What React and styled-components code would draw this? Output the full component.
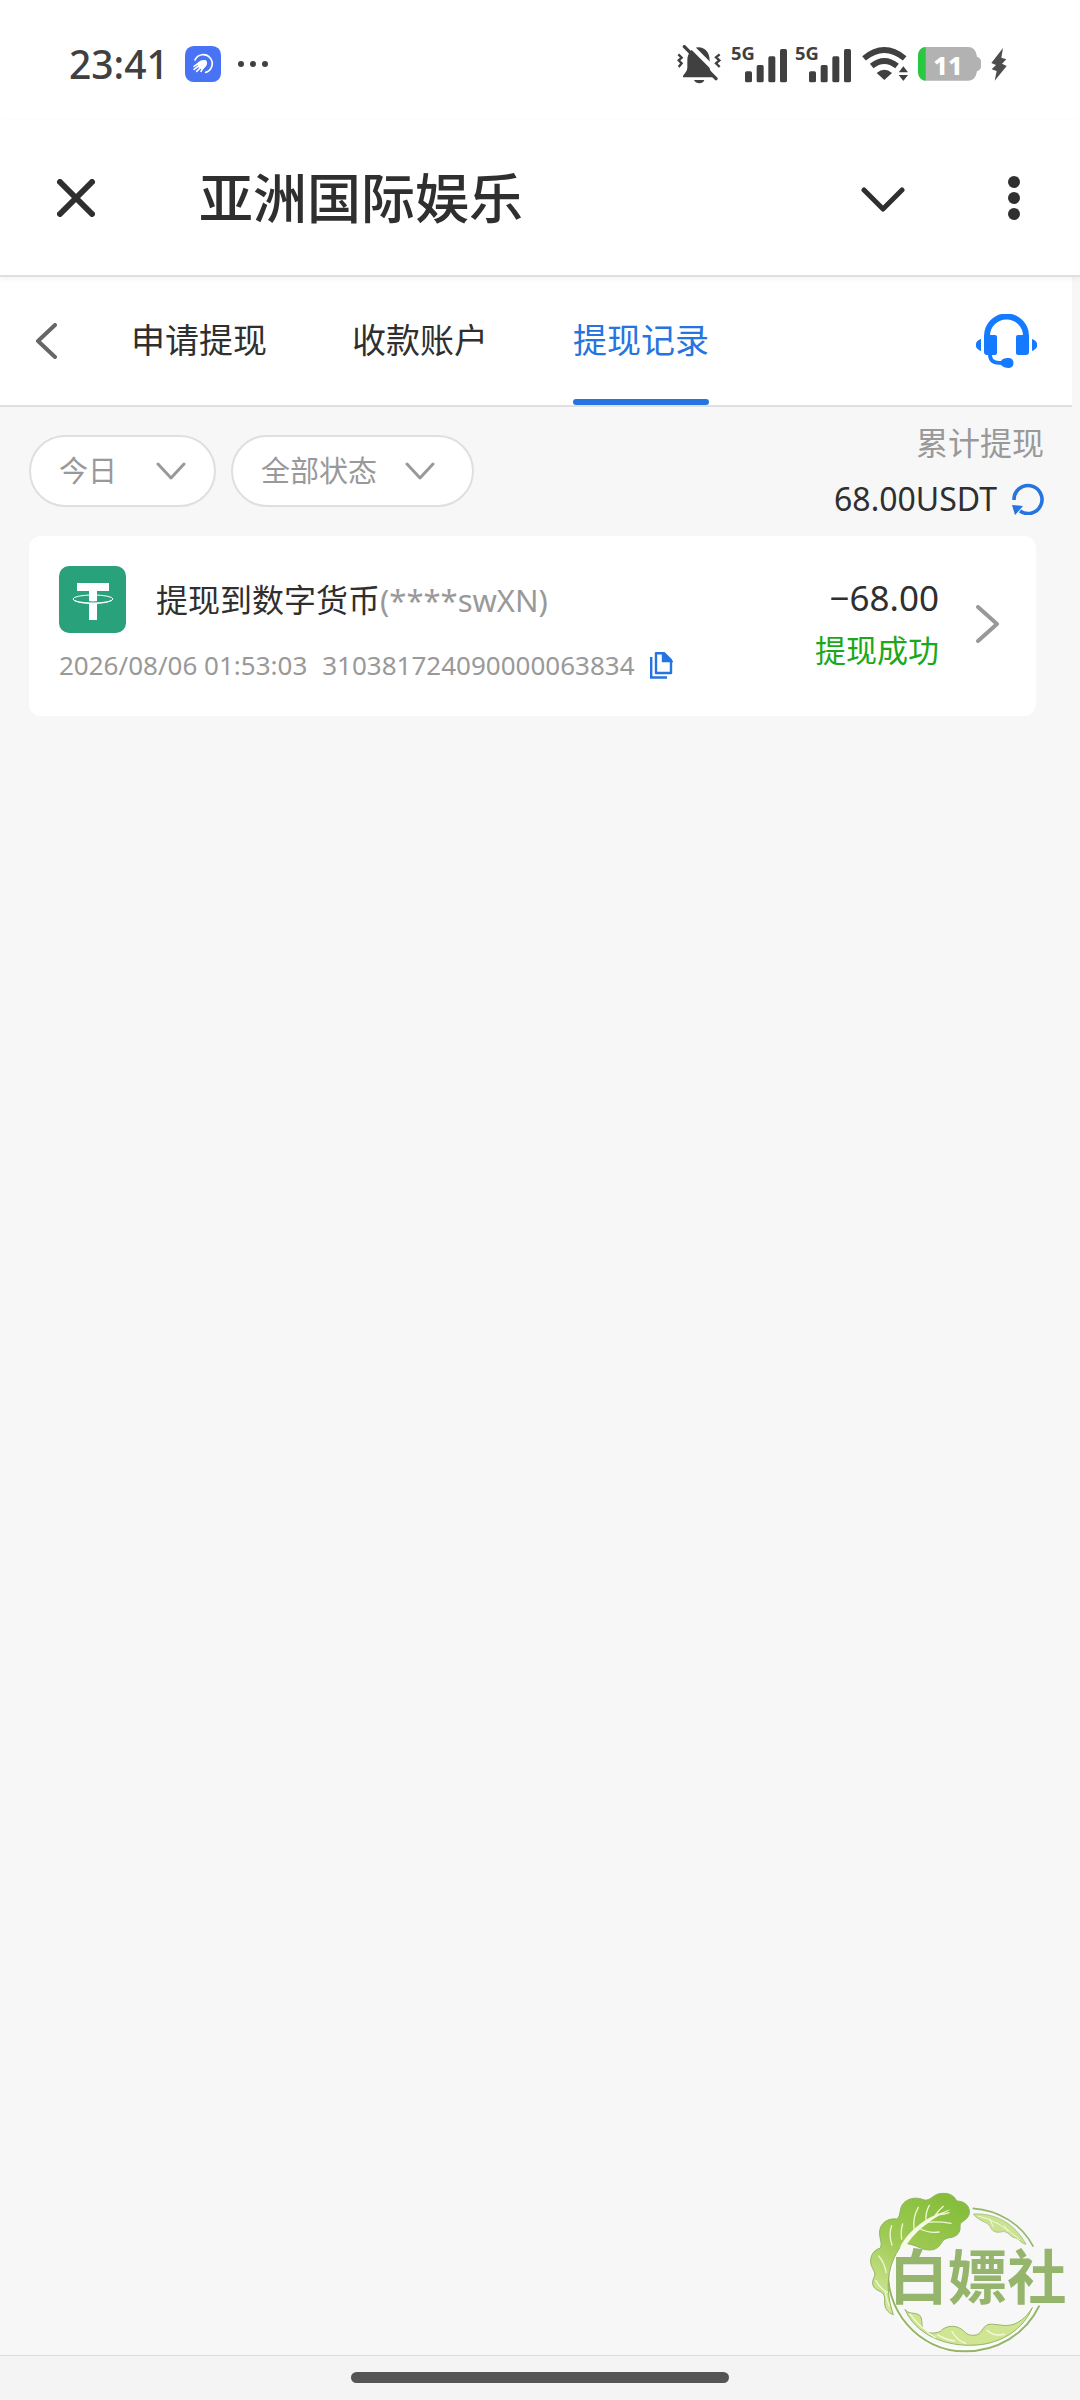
import React, { useState } from 'react';
import styled, { createGlobalStyle } from 'styled-components';

const theme = {
  text: '#2f2f2f',
  muted: '#999999',
  blue: '#2674e0',
  iconBlue: '#147aff',
  green: '#1ba81b',
  page: '#f7f7f7',
  border: '#dfdfdf',
  status: '#404040',
  logoGreen: '#94b56b',
};

const fontSize = {
  small: '26px',
  filter: '29px',
  note: '31px',
  medium: '32px',
  large: '35px',
};

const GlobalStyle = createGlobalStyle`
  * {
    box-sizing: border-box;
  }
  body {
    margin: 0;
    background: ${theme.page};
    color: ${theme.text};
    font-family: 'Noto Sans', 'Noto Sans CJK SC', sans-serif;
  }
  button, select {
    font: inherit;
    color: inherit;
    background: none;
    border: none;
    padding: 0;
    margin: 0;
  }
  svg {
    display: block;
    flex-shrink: 0;
  }
`;

const Page = styled.div`
  display: flex;
  flex-direction: column;
  min-height: 100vh;
`;

const StatusBar = styled.div`
  display: flex;
  align-items: center;
  justify-content: space-between;
  height: 120px;
  padding: 8px 73px 0 69px;
  background: #fff;
  color: ${theme.status};
`;

const StatusGroup = styled.div`
  display: flex;
  align-items: center;
  gap: ${props => props.$gap};
`;

const Clock = styled.span`
  font-size: 39px;
  font-weight: 500;
  line-height: 48px;
`;

const AppBar = styled.header`
  display: flex;
  align-items: center;
  height: 157px;
  padding: 0 59px 0 57px;
  background: #fff;
  border-bottom: 2px solid ${theme.border};
  box-shadow: 0 2px 5px rgba(0, 0, 0, 0.05);
  position: relative;
`;

const Title = styled.h1`
  flex: 1;
  margin: 0 0 4px 104px;
  font-family: 'Noto Sans CJK SC', sans-serif;
  font-size: 54px;
  font-weight: 500;
  line-height: 72px;
`;

const IconButton = styled.button`
  display: flex;
  align-items: center;
  justify-content: center;
  cursor: pointer;
`;

const MoreButton = styled(IconButton)`
  margin-left: 102px;
`;

const Content = styled.main`
  flex: 1;
  margin-right: 8px;
`;

const TabBar = styled.nav`
  display: flex;
  align-items: stretch;
  height: 130px;
  padding: 0 35px;
  background: #fff;
  border-bottom: 2px solid ${theme.border};
`;

const Tabs = styled.div`
  display: flex;
  flex: 1;
  gap: 85px;
  margin-left: 73px;
`;

const Tab = styled.a`
  display: flex;
  align-items: center;
  position: relative;
  padding-bottom: 2px;
  font-size: 34px;
  line-height: 48px;
  text-decoration: none;
  white-space: nowrap;
  color: ${props => (props.$active ? theme.blue : theme.text)};
  &::after {
    content: '';
    position: absolute;
    left: 0;
    right: 0;
    bottom: 0;
    height: 6px;
    border-radius: 3px;
    background: ${props => (props.$active ? theme.blue : 'transparent')};
  }
`;

const Toolbar = styled.div`
  display: flex;
  align-items: center;
  gap: 15px;
  padding: 8px 28px 9px 29px;
`;

const Pill = styled.label`
  display: flex;
  align-items: center;
  width: ${props => props.$width};
  height: 72px;
  padding: 0 ${props => props.$end} 0 28px;
  background: #fff;
  border: 2px solid ${theme.border};
  border-radius: 36px;
  color: ${theme.muted};
`;

const PillSelect = styled.select`
  appearance: none;
  flex: 1;
  min-width: 0;
  font-size: ${fontSize.filter};
  line-height: 40px;
  outline: none;
`;

const Summary = styled.div`
  margin-left: auto;
  text-align: right;
  line-height: 56px;
`;

const SummaryLabel = styled.div`
  font-size: ${fontSize.medium};
  color: ${theme.muted};
`;

const SummaryTotal = styled.div`
  display: flex;
  align-items: center;
  justify-content: flex-end;
  gap: 15px;
  font-size: ${fontSize.medium};
`;

const Card = styled.article`
  display: flex;
  align-items: center;
  margin: 0 36px 0 29px;
  padding: 30px 36px 31px 30px;
  background: #fff;
  border-radius: 12px;
`;

const CardMain = styled.div`
  display: flex;
  flex-direction: column;
  flex: 1;
  gap: 12px;
`;

const CardTitle = styled.div`
  display: flex;
  align-items: center;
  gap: 30px;
  font-size: ${fontSize.medium};
  line-height: 44px;
`;

const Account = styled.span`
  font-size: ${fontSize.note};
  color: ${theme.muted};
`;

const Meta = styled.div`
  display: flex;
  align-items: center;
  gap: 15px;
  font-size: ${fontSize.small};
  line-height: 40px;
  color: ${theme.muted};
`;

const Result = styled.div`
  margin-right: 37px;
  padding-bottom: 3px;
  text-align: right;
  line-height: 52px;
`;

const Amount = styled.div`
  font-size: ${fontSize.large};
`;

const State = styled.div`
  font-size: ${fontSize.note};
  color: ${theme.green};
`;

const DetailButton = styled(IconButton)`
  padding-bottom: 4px;
`;

const GestureArea = styled.footer`
  display: flex;
  justify-content: center;
  height: 45px;
  padding-top: 16px;
  background: #f4f4f4;
  border-top: 1px solid #dcdcdc;
`;

const GestureBar = styled.div`
  width: 35%;
  height: 11px;
  border-radius: 6px;
  background: #555;
`;

const Watermark = styled.svg`
  position: fixed;
  right: 0;
  bottom: 0;
  pointer-events: none;
`;

const Chevron = ({ width, height, d, color, stroke }) => (
  <svg width={width} height={height} viewBox={`0 0 ${width} ${height}`} fill="none"
    stroke={color} strokeWidth={stroke} strokeLinecap="round" strokeLinejoin="round">
    <path d={d} />
  </svg>
);

const AppBadge = () => (
  <svg width="36" height="36" viewBox="0 0 108 108">
    <rect width="108" height="108" rx="26" fill="#4873f5" />
    <path d="M30 42A27 27 0 1 1 62 79" fill="none" stroke="#fff" strokeWidth="5" strokeLinecap="round" />
    <path d="M37 52C43 43 54 40 63 43C69 50 66 62 55 68L48 70L39 62Z" fill="#fff" />
    <path d="M42 51L27 61M45 57L27 70M50 62L35 76M56 63L48 76" stroke="#fff" strokeWidth="5" strokeLinecap="round" />
  </svg>
);

const Dots = () => (
  <svg width="32" height="8" viewBox="0 0 32 8" fill={theme.status}>
    <circle cx="4" cy="4" r="3" />
    <circle cx="16" cy="4" r="3" />
    <circle cx="28" cy="4" r="3" />
  </svg>
);

const MutedBell = () => (
  <svg width="44" height="39" viewBox="0 0 132 117">
    <path d="M18 97C16 88 30 84 31 68V46C31 24 46 7 65 7C83 7 98 22 98 46V68C99 84 112 88 110 97Z" fill={theme.status} />
    <path d="M51 105H82C78 118 57 118 51 105Z" fill={theme.status} />
    <path d="M27 -12L137 98L125 110" fill="none" stroke="#fff" strokeWidth="14" />
    <path d="M22 5L117 101" stroke={theme.status} strokeWidth="10" strokeLinecap="round" />
    <path d="M4 28L14 38L5 46L14 55L5 66M128 28L117 37L127 46L117 55L128 66" fill="none" stroke={theme.status} strokeWidth="7" />
  </svg>
);

const Signal = () => (
  <svg width="57" height="52" viewBox="0 -21 171 156" fill={theme.status}>
    <text x="0" y="44" fontSize="55" fontWeight="700">5G</text>
    <rect x="42" y="79" width="21" height="33" rx="5" />
    <rect x="77" y="60" width="21" height="52" rx="5" />
    <rect x="112" y="34" width="21" height="78" rx="5" />
    <rect x="147" y="12" width="21" height="100" rx="5" />
  </svg>
);

const Wifi = () => (
  <svg width="46" height="34" viewBox="0 0 138 102">
    <path d="M6 34Q67 -16 128 34M29 57Q67 27 105 57" fill="none" stroke={theme.status} strokeWidth="17" />
    <path d="M44 78Q67 59 90 78L67 99Z" fill={theme.status} />
    <path d="M124 54L142 78H106ZM124 105L142 82H106Z" fill={theme.status} stroke="#fff" strokeWidth="4" />
  </svg>
);

const Battery = () => (
  <svg width="63" height="34" viewBox="0 0 189 102">
    <path d="M28 0H150C166 0 174 10 177 29C184 31 189 36 189 44V58C189 66 184 71 177 73C174 91 166 101 150 101H28C10 101 0 90 0 72V29C0 11 10 0 28 0Z" fill="#b2b2b2" />
    <path d="M23 0C8 1 0 12 0 29V72C0 89 8 100 23 101Z" fill="#28c840" />
    <text x="90" y="83" textAnchor="middle" fontSize="76" fontWeight="800" fill="#fff">11</text>
  </svg>
);

const Bolt = () => (
  <svg width="16" height="33" viewBox="0 0 48 99">
    <path d="M36 0L1 45L15 51L2 64L17 69L11 98L47 54L33 47L46 34L31 29Z" fill="#4d4d4d" />
  </svg>
);

const Kebab = () => (
  <svg width="14" height="46" viewBox="0 0 14 46" fill={theme.text}>
    <circle cx="7" cy="7" r="6" />
    <circle cx="7" cy="23" r="6" />
    <circle cx="7" cy="39" r="6" />
  </svg>
);

const Headset = () => (
  <svg width="61" height="55" viewBox="0 0 61 55" fill={theme.iconBlue}>
    <path d="M11 24V22A19 19 0 0 1 50 22V24" fill="none" stroke={theme.iconBlue} strokeWidth="6" />
    <path d="M8 21H19Q21 21 21 23V39Q21 41 19 41H11Q8 41 8 38ZM53 21H42Q40 21 40 23V39Q40 41 42 41H50Q53 41 53 38Z" />
    <path d="M5 25V37C-2 35 -2 27 5 25ZM56 25V37C63 35 63 27 56 25Z" />
    <path d="M14 40C14 47 17 49 27 49" fill="none" stroke={theme.iconBlue} strokeWidth="4" />
    <path d="M25 47C27 44 30 44 33 44C39 44 39 54 33 54C29 54 27 53 25 51Z" />
  </svg>
);

const Refresh = () => (
  <svg width="32" height="32" viewBox="0 0 32 32">
    <path d="M2 17A14 14 0 1 1 8 28" fill="none" stroke={theme.blue} strokeWidth="3.6" />
    <path d="M0 22L11 23L3 32Z" fill={theme.blue} />
  </svg>
);

const Copy = () => (
  <svg width="23" height="27" viewBox="0 0 23 27" fill="none" stroke={theme.blue} strokeWidth="2.4">
    <path d="M6 1.2H14L21 8V21H6Z" strokeLinejoin="round" />
    <path d="M13 1L21 9H13Z" fill={theme.blue} />
    <path d="M1.2 5V25.5H17" />
  </svg>
);

const Tether = () => (
  <svg width="67" height="67" viewBox="0 0 67 67">
    <rect width="67" height="67" rx="10" fill="#29a17b" />
    <path d="M18 17H50V25H38V54H30V25H18Z" fill="#fff" />
    <path d="M29 36Q34 37 39 36" stroke="#29a17b" strokeWidth="2" fill="none" />
    <ellipse cx="34" cy="33" rx="20" ry="4" fill="none" stroke="#fff" strokeWidth="1" />
    <path d="M14 33C16 39 51 39 54 33" fill="none" stroke="#fff" strokeWidth="1" />
  </svg>
);

const CabbageLogo = () => (
  <Watermark width="240" height="240" viewBox="0 0 720 720" role="img" aria-label="白嫖社">
    <defs>
      <linearGradient id="leaf" x1="0.7" y1="0" x2="0.2" y2="1">
        <stop offset="0" stopColor="#86bd3b" />
        <stop offset="0.5" stopColor="#9fcb55" />
        <stop offset="1" stopColor="#d6e99d" />
      </linearGradient>
    </defs>
    <path d="M190 249C155 290 140 345 150 397C161 456 201 506 250 537C330 586 440 580 513 525C540 505 560 478 576 444" fill="none" stroke="#fdfff6" strokeWidth="14" />
    <path d="M398 145C475 150 545 192 580 260" fill="none" stroke={theme.logoGreen} strokeWidth="5" />
    <path d="M146 310C128 450 238 575 375 574C470 574 557 524 598 437" fill="none" stroke={theme.logoGreen} strokeWidth="6" />
    <path d="M160 464C143 458 132 445 134 421C135 404 128 398 116 392C96 384 94 367 103 350C110 337 94 326 92 307C91 287 100 270 120 265C129 250 117 237 119 213C122 189 143 174 170 177C185 168 175 145 192 128C210 111 236 112 252 120C274 124 278 100 309 100C333 99 344 111 350 123C374 123 391 139 388 160C385 180 363 183 360 195C363 218 351 230 330 233C310 235 308 245 298 258C284 273 261 272 244 265C224 256 207 250 189 250C150 300 128 370 160 464Z" fill="url(#leaf)" stroke="#8eb35b" strokeWidth="3" />
    <path d="M180 262C196 229 218 207 257 180C278 168 300 159 333 148C303 164 284 173 266 188C232 211 212 233 190 270Z" fill="#f6fbe6" />
    <path d="M222 207Q218 171 235 142M258 182Q256 157 268 136M284 168Q298 149 310 139M236 204Q266 221 297 216M258 187Q294 183 333 190M156 255Q145 223 155 197M185 237Q181 215 188 192M139 338Q131 303 116 288M142 397Q120 386 108 362M148 438Q139 417 136 399M290 163Q310 165 327 158" fill="none" stroke="#eef7d2" strokeWidth="4" strokeLinecap="round" />
    <path d="M400 162C465 158 525 190 558 253C542 250 539 237 527 234C511 233 507 215 490 214C474 220 457 217 452 202C443 183 419 187 400 162Z" fill="#cbe291" stroke="#94b56b" strokeWidth="2" />
    <path d="M413 168Q475 180 540 240M449 176L460 202M493 196L504 215" fill="none" stroke="#f3f9dc" strokeWidth="3" />
    <path d="M195 448C205 465 225 455 239 466C251 480 240 497 253 511C270 523 289 520 301 514C318 496 343 496 358 504C377 513 377 526 399 526C429 526 423 499 447 493C470 490 495 503 523 492C547 482 562 466 577 443C550 508 485 550 410 555C314 562 226 522 195 448Z" fill="#cfe591" stroke="#94b56b" strokeWidth="3" />
    <path d="M209 461Q238 501 287 534M335 513Q353 544 379 551M440 510Q465 532 495 522M292 524Q319 541 345 543" fill="none" stroke="#f3f9dc" strokeWidth="4" />
    <text x="146" y="416" fontFamily="'Noto Sans CJK SC', sans-serif" fontSize="178" fontWeight="700" fill={theme.logoGreen}>白嫖社</text>
  </Watermark>
);

const filterChevron = 'M2 2L15 16L28 2';

const tabs = ['申请提现', '收款账户', '提现记录'];

const filters = [
  { name: '日期', width: '187px', end: '28px', options: ['今日', '昨日'] },
  { name: '状态', width: '243px', end: '37px', options: ['全部状态', '提现成功'] },
];

const records = [
  {
    id: '310381724090000063834',
    title: '提现到数字货币',
    account: '(****swXN)',
    time: '2026/08/06 01:53:03',
    amount: '−68.00',
    state: '提现成功',
  },
];

const Record = ({ record }) => (
  <Card>
    <CardMain>
      <CardTitle>
        <Tether />
        <div>{record.title}<Account>{record.account}</Account></div>
      </CardTitle>
      <Meta>
        <time>{record.time}</time>
        <span>{record.id}</span>
        <IconButton aria-label="复制"><Copy /></IconButton>
      </Meta>
    </CardMain>
    <Result>
      <Amount>{record.amount}</Amount>
      <State>{record.state}</State>
    </Result>
    <DetailButton aria-label="详情">
      <Chevron width={24} height={38} d="M2 2L21 19L2 36" color={theme.muted} stroke={4} />
    </DetailButton>
  </Card>
);

const App = () => {
  const [activeTab, setActiveTab] = useState('提现记录');

  return (
    <>
      <GlobalStyle />
      <Page>
        <StatusBar>
          <StatusGroup $gap="16px">
            <Clock>23:41</Clock>
            <AppBadge />
            <Dots />
          </StatusGroup>
          <StatusGroup $gap="10px">
            <MutedBell />
            <StatusGroup $gap="7px">
              <Signal />
              <Signal />
            </StatusGroup>
            <Wifi />
            <Battery />
            <Bolt />
          </StatusGroup>
        </StatusBar>
        <AppBar>
          <IconButton aria-label="关闭">
            <Chevron width={38} height={38} d="M3 3L35 35M35 3L3 35" color={theme.text} stroke={6} />
          </IconButton>
          <Title>亚洲国际娱乐</Title>
          <IconButton aria-label="展开">
            <Chevron width={44} height={30} d="M3 7L22 26L41 7" color={theme.text} stroke={5} />
          </IconButton>
          <MoreButton aria-label="更多"><Kebab /></MoreButton>
        </AppBar>
        <Content>
          <TabBar>
            <IconButton aria-label="返回">
              <Chevron width={23} height={36} d="M20 2L3 18L20 34" color="#666" stroke={4} />
            </IconButton>
            <Tabs>
              {tabs.map(tab => (
                <Tab key={tab} href="#" $active={tab === activeTab} onClick={() => setActiveTab(tab)}>
                  {tab}
                </Tab>
              ))}
            </Tabs>
            <IconButton aria-label="客服"><Headset /></IconButton>
          </TabBar>
          <Toolbar>
            {filters.map(filter => (
              <Pill key={filter.name} $width={filter.width} $end={filter.end}>
                <PillSelect aria-label={filter.name}>
                  {filter.options.map(option => <option key={option}>{option}</option>)}
                </PillSelect>
                <Chevron width={30} height={18} d={filterChevron} color={theme.muted} stroke={3} />
              </Pill>
            ))}
            <Summary>
              <SummaryLabel>累计提现</SummaryLabel>
              <SummaryTotal>
                68.00USDT
                <IconButton aria-label="刷新"><Refresh /></IconButton>
              </SummaryTotal>
            </Summary>
          </Toolbar>
          {records.map(record => <Record key={record.id} record={record} />)}
        </Content>
        <GestureArea>
          <GestureBar />
        </GestureArea>
        <CabbageLogo />
      </Page>
    </>
  );
};

export default App;
